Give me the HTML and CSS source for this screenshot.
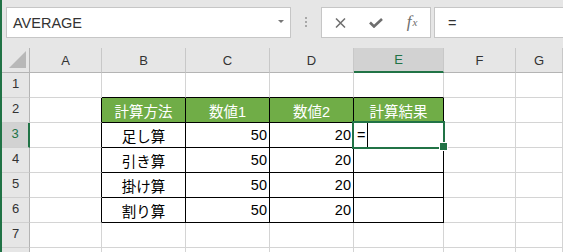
FILE: index.html
```html
<!DOCTYPE html>
<html lang="ja">
<head>
    <meta charset="UTF-8">
    <title>計算方法</title>
    <link rel="stylesheet" href="styles.css">
</head>
<body>
<div class="app">
    <div class="toolbar">
        <div class="namebox">
            <span class="name">AVERAGE</span>
            <span class="caret"></span>
        </div>
        <div class="grip"><i></i><i></i><i></i></div>
        <div class="fbuttons">
            <span class="fbtn">
                <svg width="11" height="10" viewBox="0 0 11 10"><path d="M1 0.5 L10 9.5 M10 0.5 L1 9.5" stroke="#6e6e6e" stroke-width="1.5" fill="none"/></svg>
            </span>
            <span class="fbtn">
                <svg width="14" height="10" viewBox="0 0 14 10"><path d="M1 4.5 L5 8.5 L13 1" stroke="#6e6e6e" stroke-width="2.6" fill="none"/></svg>
            </span>
            <span class="fbtn fx">f<small>x</small></span>
        </div>
        <div class="formula">=</div>
    </div>

    <div class="sheet">
        <!-- 列見出し -->
        <div class="hd corner"><svg width="27" height="24" viewBox="0 0 27 24"><polygon points="7,20 24,20 24,3" fill="#b8b8b8"/></svg></div>
        <div class="hd col">A</div>
        <div class="hd col">B</div>
        <div class="hd col">C</div>
        <div class="hd col">D</div>
        <div class="hd col on">E</div>
        <div class="hd col">F</div>
        <div class="hd col">G</div>

        <!-- 1 -->
        <div class="hd row">1</div>
        <div class="cell"></div>
        <div class="cell tb"></div>
        <div class="cell tb"></div>
        <div class="cell tb"></div>
        <div class="cell tb"></div>
        <div class="cell"></div>
        <div class="cell"></div>

        <!-- 2 -->
        <div class="hd row">2</div>
        <div class="cell tr"></div>
        <div class="cell t th">計算方法</div>
        <div class="cell t th">数値1</div>
        <div class="cell t th">数値2</div>
        <div class="cell t th">計算結果</div>
        <div class="cell"></div>
        <div class="cell"></div>

        <!-- 3 -->
        <div class="hd row on">3</div>
        <div class="cell tr"></div>
        <div class="cell t mid">足し算</div>
        <div class="cell t num">50</div>
        <div class="cell t num">20</div>
        <div class="cell t sel">=<span class="cursor"></span></div>
        <div class="cell"></div>
        <div class="cell"></div>

        <!-- 4 -->
        <div class="hd row">4</div>
        <div class="cell tr"></div>
        <div class="cell t mid">引き算</div>
        <div class="cell t num">50</div>
        <div class="cell t num">20</div>
        <div class="cell t"></div>
        <div class="cell"></div>
        <div class="cell"></div>

        <!-- 5 -->
        <div class="hd row">5</div>
        <div class="cell tr"></div>
        <div class="cell t mid">掛け算</div>
        <div class="cell t num">50</div>
        <div class="cell t num">20</div>
        <div class="cell t"></div>
        <div class="cell"></div>
        <div class="cell"></div>

        <!-- 6 -->
        <div class="hd row">6</div>
        <div class="cell tr"></div>
        <div class="cell t mid">割り算</div>
        <div class="cell t num">50</div>
        <div class="cell t num">20</div>
        <div class="cell t"></div>
        <div class="cell"></div>
        <div class="cell"></div>

        <!-- 7 -->
        <div class="hd row">7</div>
        <div class="cell"></div>
        <div class="cell"></div>
        <div class="cell"></div>
        <div class="cell"></div>
        <div class="cell"></div>
        <div class="cell"></div>
        <div class="cell"></div>

        <!-- 8 (下端で切れる行) -->
        <div class="hd row"></div>
        <div class="cell"></div>
        <div class="cell"></div>
        <div class="cell"></div>
        <div class="cell"></div>
        <div class="cell"></div>
        <div class="cell"></div>
        <div class="cell"></div>
    </div>
</div>
</body>
</html>
```

FILE: styles.css
```css
* {
    box-sizing: border-box;
}

body {
    margin: 0;
    font-family: "Liberation Sans", "Noto Sans CJK JP", sans-serif;
    color: #000;
}

.app {
    width: 563px;
    height: 252px;
    overflow: hidden;
    border-left: 2px solid #217346;
    background: #fff;
}

/* 数式バー */
.toolbar {
    height: 48px;
    background: #e6e6e6;
    display: flex;
    align-items: flex-start;
    padding-top: 7px;
}

.namebox {
    margin-left: 4px;
    width: 285px;
    height: 31px;
    flex-shrink: 0;
    background: #fff;
    border: 1px solid #c6c6c6;
    display: flex;
    align-items: center;
    padding: 0 6px;
}

.name {
    flex: 1;
    font-size: 14.5px;
    color: #333;
}

.caret {
    width: 0;
    height: 0;
    border-left: 3px solid transparent;
    border-right: 3px solid transparent;
    border-top: 3px solid #777;
    margin-top: -3px;
}

.grip {
    width: 30px;
    height: 31px;
    flex-shrink: 0;
    display: flex;
    flex-direction: column;
    align-items: center;
    justify-content: center;
    gap: 2px;
    padding-bottom: 2px;
}

.grip i {
    width: 2px;
    height: 2px;
    background: #a8a8a8;
}

.fbuttons {
    width: 110px;
    height: 31px;
    flex-shrink: 0;
    background: #fff;
    border: 1px solid #c6c6c6;
    display: flex;
    align-items: center;
}

.fbtn {
    width: 36px;
    display: flex;
    justify-content: center;
    align-items: center;
}

.fx {
    font-family: "Liberation Serif", serif;
    font-style: italic;
    font-size: 17px;
    color: #6e6e6e;
    padding-bottom: 2px;
}

.fx small {
    font-size: 11px;
    margin-left: 1px;
}

.formula {
    margin-left: 3px;
    width: 200px;
    height: 31px;
    flex-shrink: 0;
    background: #fff;
    border: 1px solid #c6c6c6;
    border-right: none;
    padding-left: 13px;
    display: flex;
    align-items: center;
    font-size: 14.5px;
    color: #333;
}

/* シート */
.sheet {
    display: grid;
    grid-template-columns: 28px 72px 84px 84px 84px 90px 72px 1fr;
    grid-auto-rows: 25px;
}

.hd {
    background: #e6e6e6;
    color: #333;
    font-size: 13px;
    display: flex;
    align-items: center;
    justify-content: center;
}

.col {
    border-right: 1px solid #c8c8c8;
    border-bottom: 1px solid #b4b4b4;
}

.corner {
    border-right: 1px solid #b4b4b4;
    border-bottom: 1px solid #b4b4b4;
    align-items: flex-start;
    justify-content: flex-start;
}

.row {
    border-right: 1px solid #b4b4b4;
    border-bottom: 1px solid #d0d0d0;
    padding-bottom: 3px;
}

.col.on {
    background: #d2d2d2;
    color: #217346;
    border-bottom: 2px solid #217346;
}

.row.on {
    background: #d2d2d2;
    color: #217346;
    border-right: 2px solid #217346;
}

.cell {
    border-right: 1px solid #d4d4d4;
    border-bottom: 1px solid #d4d4d4;
    font-size: 14.5px;
    display: flex;
    align-items: center;
    white-space: nowrap;
}

.tb {
    border-bottom-color: #000;
}

.tr {
    border-right-color: #000;
}

.t {
    border-right-color: #000;
    border-bottom-color: #000;
}

.th {
    background: #70ad47;
    color: #fff;
    justify-content: center;
}

.mid {
    justify-content: center;
}

.num {
    justify-content: flex-end;
    padding-right: 2px;
}

/* 選択中のセル */
.sel {
    position: relative;
    padding-left: 3px;
}

.sel::after {
    content: "";
    position: absolute;
    top: -2px;
    left: -2px;
    right: -2px;
    bottom: -2px;
    border: 2px solid #217346;
    z-index: 1;
}

.sel::before {
    content: "";
    position: absolute;
    right: -5px;
    bottom: -4px;
    width: 7px;
    height: 7px;
    background: #217346;
    border: 1px solid #fff;
    z-index: 2;
}

.cursor {
    align-self: stretch;
    width: 1px;
    margin-left: 2px;
    background: #000;
}
```
